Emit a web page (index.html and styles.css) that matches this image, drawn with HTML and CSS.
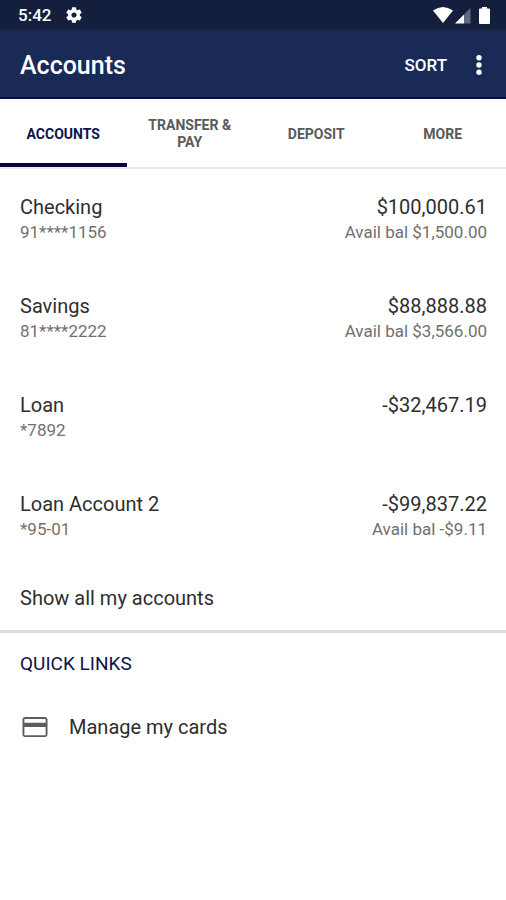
FILE: index.html
```
<!DOCTYPE html>
<html lang="en">
    <head>
        <meta charset="utf-8">
        <meta name="viewport" content="width=device-width, initial-scale=1">
        <title>Accounts</title>
        <link rel="stylesheet" href="styles.css">
    </head>
    <body>
        <div class="status-bar">
            <span class="time">5:42</span>
            <svg class="gear" width="18" height="18" viewBox="1 1 22 22" fill="#fff"><path d="M19.14 12.94c.04-.3.06-.61.06-.94 0-.32-.02-.64-.07-.94l2.03-1.58c.18-.14.23-.41.12-.61l-1.92-3.32c-.12-.22-.37-.29-.59-.22l-2.39.96c-.5-.38-1.03-.7-1.62-.94l-.36-2.54c-.04-.24-.24-.41-.48-.41h-3.84c-.24 0-.43.17-.47.41l-.36 2.54c-.59.24-1.13.57-1.62.94l-2.39-.96c-.22-.08-.47 0-.59.22L2.74 8.87c-.12.21-.08.47.12.61l2.03 1.58c-.05.3-.09.63-.09.94s.02.64.07.94l-2.03 1.58c-.18.14-.23.41-.12.61l1.92 3.32c.12.22.37.29.59.22l2.39-.96c.5.38 1.03.7 1.62.94l.36 2.54c.05.24.24.41.48.41h3.84c.24 0 .44-.17.47-.41l.36-2.54c.59-.24 1.13-.56 1.62-.94l2.39.96c.22.08.47 0 .59-.22l1.92-3.32c.12-.22.07-.47-.12-.61l-2.01-1.58zM12 15.2c-1.77 0-3.2-1.43-3.2-3.2s1.43-3.2 3.2-3.2 3.2 1.43 3.2 3.2-1.43 3.2-3.2 3.2z"/></svg>
            <svg class="signals" width="60" height="20" viewBox="0 0 60 20">
                <path fill="#fff" d="M2 5.500Q12 -1.500 22 5.500L12 18z"/>
                <path fill="#fff" d="M24 18.500L33 9.500V18.500z"/>
                <path fill="#5f6880" d="M33 9.500L39.500 3V18.500H33z"/>
                <path fill="#fff" d="M51 2h5v1.500h2q1 0 1 1v13.500q0 1-1 1h-9q-1 0-1-1V4.500q0-1 1-1h2z"/>
            </svg>
        </div>

        <header class="app-bar">
            <h1>Accounts</h1>
            <button class="sort" type="button">SORT</button>
            <button class="menu" type="button" aria-label="More options">
                <svg width="8" height="22" viewBox="0 0 8 22" fill="#fff"><circle cx="4" cy="3.700" r="2.700"/><circle cx="4" cy="11" r="2.700"/><circle cx="4" cy="18.300" r="2.700"/></svg>
            </button>
        </header>

        <nav class="tabs">
            <a class="tab active" href="#accounts">ACCOUNTS</a>
            <a class="tab" href="#transfer">TRANSFER &amp; PAY</a>
            <a class="tab" href="#deposit">DEPOSIT</a>
            <a class="tab" href="#more">MORE</a>
        </nav>

        <main>
            <ul class="accounts" id="accounts">
                <li class="account">
                    <div class="left">
                        <div class="name">Checking</div>
                        <div class="detail">91****1156</div>
                    </div>
                    <div class="right">
                        <div class="name">$100,000.61</div>
                        <div class="detail">Avail bal $1,500.00</div>
                    </div>
                </li>
                <li class="account">
                    <div class="left">
                        <div class="name">Savings</div>
                        <div class="detail">81****2222</div>
                    </div>
                    <div class="right">
                        <div class="name">$88,888.88</div>
                        <div class="detail">Avail bal $3,566.00</div>
                    </div>
                </li>
                <li class="account">
                    <div class="left">
                        <div class="name">Loan</div>
                        <div class="detail">*7892</div>
                    </div>
                    <div class="right">
                        <div class="name">-$32,467.19</div>
                    </div>
                </li>
                <li class="account">
                    <div class="left">
                        <div class="name">Loan Account 2</div>
                        <div class="detail">*95-01</div>
                    </div>
                    <div class="right">
                        <div class="name">-$99,837.22</div>
                        <div class="detail">Avail bal -$9.11</div>
                    </div>
                </li>
            </ul>
            <a class="show-all" href="#all">Show all my accounts</a>

            <section class="quick-links">
                <h2>QUICK LINKS</h2>
                <a class="quick-link" href="#cards">
                    <svg width="30" height="30" viewBox="0 0 24 24" fill="#5c5c5c"><path d="M20 4H4c-1.110 0-1.990.890-1.990 2L2 18c0 1.110.890 2 2 2h16c1.110 0 2-.890 2-2V6c0-1.110-.890-2-2-2zm.5 14.500h-17v-6.500h17v6.500zm0-10h-17V5.500h17v3z"/></svg>
                    <span>Manage my cards</span>
                </a>
            </section>
        </main>
    </body>
</html>
```

FILE: styles.css
```
*{
    box-sizing:border-box;
}
body{
    margin:0;
    background-color:#fff;
    color:#2e2e2e;
    font-family:Roboto, "Liberation Sans", sans-serif;
    font-size:20px;
}
a{
    color:inherit;
    text-decoration:none;
}
button{
    padding:0;
    border:0;
    background:none;
    color:#fff;
    font-family:inherit;
    cursor:pointer;
}
.status-bar{
    display:flex;
    align-items:center;
    height:30px;
    padding:0 15px 0 18px;
    background-color:#141f3d;
    color:#fff;
}
.time{
    font-size:17px;
    font-weight:500;
}
.gear{
    margin-left:14px;
}
.signals{
    margin-left:auto;
}
.app-bar{
    display:flex;
    align-items:center;
    height:69px;
    padding:3px 19px 0 20px;
    background-color:#1a2a57;
    border-bottom:2px solid #06104a;
    color:#fff;
}
.app-bar h1{
    margin:0;
    flex:1;
    font-size:25px;
    font-weight:500;
}
.sort{
    font-size:17px;
    font-weight:500;
}
.menu{
    display:flex;
    justify-content:center;
    width:16px;
    margin-left:24px;
}
.tabs{
    display:grid;
    grid-template-columns:repeat(4, 1fr);
    height:70px;
    border-bottom:2px solid #ebebeb;
}
.tab{
    display:flex;
    align-items:center;
    justify-content:center;
    padding:2px 16px 0;
    color:#5a5a5a;
    font-size:14px;
    font-weight:700;
    line-height:17px;
    text-align:center;
}
.tab.active{
    color:#10124f;
    box-shadow:inset 0 -4px #06063d;
}
.accounts{
    margin:0;
    padding:0;
    list-style:none;
}
.account{
    display:flex;
    justify-content:space-between;
    padding:26px 19px 24px 20px;
}
.right{
    text-align:right;
}
.name{
    line-height:25px;
}
.detail{
    color:#707070;
    font-size:17px;
    line-height:24px;
}
.show-all{
    display:block;
    padding:20px 20px 19px;
    line-height:26px;
}
.quick-links{
    border-top:3px solid #dedede;
}
.quick-links h2{
    margin:0;
    padding:18px 20px;
    color:#10124f;
    font-size:19px;
    font-weight:400;
    line-height:26px;
}
.quick-link{
    display:flex;
    align-items:center;
    gap:19px;
    padding:17px 20px;
}
```
